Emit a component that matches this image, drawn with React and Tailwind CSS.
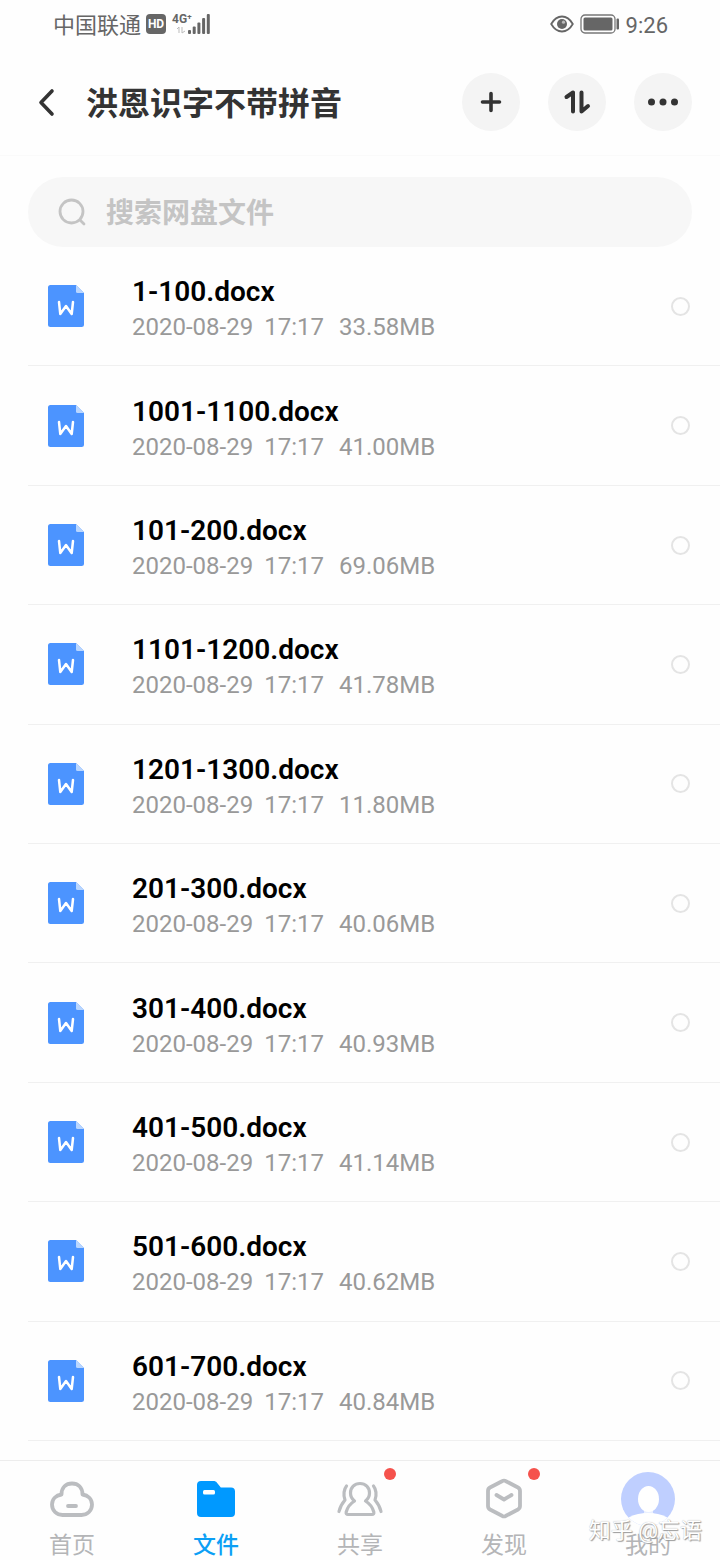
import React, { useState } from "react";

const files = [
  { name: "1-100.docx", size: "33.58MB" },
  { name: "1001-1100.docx", size: "41.00MB" },
  { name: "101-200.docx", size: "69.06MB" },
  { name: "1101-1200.docx", size: "41.78MB" },
  { name: "1201-1300.docx", size: "11.80MB" },
  { name: "201-300.docx", size: "40.06MB" },
  { name: "301-400.docx", size: "40.93MB" },
  { name: "401-500.docx", size: "41.14MB" },
  { name: "501-600.docx", size: "40.62MB" },
  { name: "601-700.docx", size: "40.84MB" },
];

const StatusBar = () => (
  <div className="flex h-12 items-center justify-between pl-[53px] pr-[52px] text-[22px] text-[#666]">
    <div className="flex items-center">
      <span className="pt-0.5">中国联通</span>
      <span className="ml-[5px] flex h-5 w-5 items-center justify-center rounded bg-[#666] text-[12px] font-bold leading-none text-white">HD</span>
      <div className="ml-1.5 flex items-end">
        <div className="flex h-6 w-[18px] flex-col">
          <span className="text-[12px] font-bold leading-[14px]">4G⁺</span>
          <svg className="ml-1 h-2 w-2.5" viewBox="0 0 10 8" fill="none" stroke="#bbb">
            <path d="M1 3 3 1v6M6 1v6l3-2" />
          </svg>
        </div>
        <svg className="mb-[2px] h-5 w-[22px] -ml-0.5" viewBox="0 0 22 20" fill="#666">
          <rect x="0" y="16" width="3" height="4" rx="1" />
          <rect x="4.7" y="12.5" width="3" height="7.5" rx="1" />
          <rect x="9.4" y="8.5" width="3" height="11.5" rx="1" />
          <rect x="14.1" y="4" width="3" height="16" rx="1" />
          <rect x="18.8" y="0" width="3" height="20" rx="1" />
        </svg>
      </div>
    </div>
    <div className="flex items-center">
      <svg className="h-[18px] w-6" viewBox="0 0 24 18" fill="none" stroke="#666" strokeWidth="1.8">
        <path d="M1.2 9Q5.5 1.5 12 1.5T22.8 9Q18.5 16.5 12 16.5T1.2 9Z" />
        <circle cx="12" cy="9" r="5" fill="#666" stroke="none" />
        <circle cx="13.5" cy="7.2" r="1.6" fill="#bbb" stroke="none" />
      </svg>
      <svg className="ml-1.5 h-5 w-10" viewBox="0 0 40 20" fill="none">
        <rect x="1" y="1" width="34" height="18" rx="4" stroke="#777" strokeWidth="1.3" />
        <rect x="3.5" y="3.5" width="29" height="13" rx="1.5" fill="#666" />
        <rect x="36.5" y="4.5" width="2.5" height="11" rx="1" fill="#666" />
      </svg>
      <span className="ml-1.5 pt-0.5">9:26</span>
    </div>
  </div>
);

const RoundButton = ({ label, children }) => (
  <button type="button" aria-label={label} className="flex h-[58px] w-[58px] items-center justify-center rounded-full bg-[#f4f4f4]">
    <svg className="h-8 w-8" viewBox="0 0 32 32" fill="none" stroke="#333" strokeWidth="3.6" strokeLinecap="round" strokeLinejoin="round">
      {children}
    </svg>
  </button>
);

const Header = () => (
  <header className="flex h-[108px] items-center border-b border-[#fafafa] pl-8 pr-7">
    <button type="button" aria-label="返回" className="flex h-12 w-[54px] items-center">
      <svg className="h-8 w-8" viewBox="0 0 32 32" fill="none" stroke="#333" strokeWidth="3.6" strokeLinecap="round" strokeLinejoin="round">
        <path d="M20 5 9 16.500 20 28" />
      </svg>
    </button>
    <h1 className="flex-1 pt-1 text-[32px] font-bold leading-10 text-[#333]">洪恩识字不带拼音</h1>
    <div className="flex gap-7">
      <RoundButton label="新建">
        <path d="M16 7.5v17M7.5 16h17" />
      </RoundButton>
      <RoundButton label="排序">
        <path d="M5.5 11 12 6.500v19M20.500 6.500v19l6.500-5.500" strokeWidth="4" />
      </RoundButton>
      <RoundButton label="更多">
        <g fill="#333" stroke="none">
          <circle cx="4.5" cy="16" r="3.5" />
          <circle cx="16" cy="16" r="3.5" />
          <circle cx="27.5" cy="16" r="3.5" />
        </g>
      </RoundButton>
    </div>
  </header>
);

const DocIcon = () => (
  <svg className="h-[42px] w-9 shrink-0" viewBox="0 0 36 42">
    <path d="M2.5 0H28l8 8v31.500a2.500 2.500 0 0 1-2.500 2.500h-31A2.500 2.500 0 0 1 0 39.500v-37A2.500 2.500 0 0 1 2.500 0Z" fill="#4c94ff" />
    <path d="M28 0l8 8h-6.500A1.500 1.500 0 0 1 28 6.500Z" fill="#b9d6ff" />
    <path d="M11 17l1.300 12L18 21l5.700 8L25 17" fill="none" stroke="#fff" strokeWidth="2.5" strokeLinejoin="round" strokeLinecap="round" />
  </svg>
);

const FileRow = ({ file, checked, onToggle }) => (
  <li className="ml-7 flex flex-1 items-center border-b border-[#f0f0f0] pl-5 pr-[30px]">
    <DocIcon />
    <label htmlFor={file.name} className="ml-12 flex-1 pt-1.5">
      <span className="block text-[28px] font-semibold leading-9 text-black">{file.name}</span>
      <span className="flex text-[24px] leading-[34px] text-[#999]">
        <span>2020-08-29</span>
        <span className="ml-[11px]">17:17</span>
        <span className="ml-[15px]">{file.size}</span>
      </span>
    </label>
    <input
      id={file.name}
      type="checkbox"
      checked={checked}
      onChange={onToggle}
      className="h-[19px] w-[19px] appearance-none rounded-full border-2 border-[#e4e4e4] checked:border-[#0099ff] checked:bg-[#0099ff]"
    />
  </li>
);

const NavItem = ({ label, active, dot, children }) => (
  <a
    href="#"
    className={`flex flex-1 flex-col items-center pt-[11px] text-[23px] ${active ? "font-medium text-[#0c9ff5]" : "text-[#b4b5b7]"}`}
  >
    <span className="relative flex h-[54px] w-[54px] shrink-0 items-center justify-center">
      {children}
      {dot && <span className="absolute -right-[9px] -top-1 h-3 w-3 rounded-full bg-[#f5524c]" />}
    </span>
    <span className="pt-1.5 leading-7">{label}</span>
  </a>
);

const navIcon = {
  className: "h-12 w-12",
  viewBox: "0 0 48 48",
  fill: "none",
  stroke: "#bbbdc0",
  strokeWidth: 3.8,
  strokeLinecap: "round",
  strokeLinejoin: "round",
};

const BottomNav = () => (
  <nav className="relative flex h-[100px] border-t border-[#ededed]">
    <NavItem label="首页">
      <svg {...navIcon}>
        <path d="M13.5 19.5C13.5 12.500 18 8.500 24 8.500s10.500 4 10.500 11c5.500.8 9.500 4.500 9.500 10 0 6-4.500 10.500-10.500 10.500h-19C8.500 40 4 35.500 4 29.500c0-5.500 4-9.200 9.500-10Z" />
        <path d="M20 31h8" />
      </svg>
    </NavItem>
    <NavItem label="文件" active>
      <svg className="h-12 w-12" viewBox="0 0 48 48">
        <path d="M9 6h12.500c1.500 0 2.500.5 3.300 1.500l4 5H39a4 4 0 0 1 4 4V38a4 4 0 0 1-4 4H9a4 4 0 0 1-4-4V10a4 4 0 0 1 4-4Z" fill="#0099ff" />
        <rect x="11" y="15" width="12" height="4.5" rx="1.5" fill="#fff" />
      </svg>
    </NavItem>
    <NavItem label="共享" dot>
      <svg {...navIcon} strokeWidth={3.2}>
        <path d="M24 8.500c-5.500 0-9.500 4-9.500 9.500 0 3.500 1.500 6 4 8-4 2.500-7 6-8.300 11-.3 1.500.3 2.500 1.800 2.500h24c1.500 0 2.100-1 1.800-2.500-1.300-5-4.300-8.500-8.300-11 2.500-2 4-4.500 4-8 0-5.500-4-9.500-9.500-9.500Z" />
        <path d="M10.500 11C8 14 7 20 9 25c-3 3.500-5 7-6 11.500M37.500 11c2.500 3 3.500 9 1.500 14 3 3.500 5 7 6 11.500" />
      </svg>
    </NavItem>
    <NavItem label="发现" dot>
      <svg {...navIcon}>
        <path d="M22 6.200a4 4 0 0 1 4 0l12 6.300a4 4 0 0 1 2 3.500v15a4 4 0 0 1-2 3.500l-12 6.300a4 4 0 0 1-4 0l-12-6.300A4 4 0 0 1 8 31V16a4 4 0 0 1 2-3.500Z" />
        <path d="m16.500 20 7.500 4.500 7.500-4.500" />
      </svg>
    </NavItem>
    <NavItem label="我的">
      <svg className="h-[54px] w-[54px]" viewBox="0 0 54 54">
        <defs>
          <clipPath id="avatar">
            <circle cx="27" cy="27" r="27" />
          </clipPath>
        </defs>
        <g clipPath="url(#avatar)">
          <rect width="54" height="54" fill="#bfcfff" />
          <path d="M23 35h9v6l4 3H19l4-3Z" fill="#eaf0ff" />
          <ellipse cx="27.5" cy="27" rx="10.5" ry="13" fill="#fff" />
          <ellipse cx="27" cy="55" rx="26" ry="14" fill="#fff" />
        </g>
      </svg>
    </NavItem>
    <span className="pointer-events-none absolute bottom-[11px] right-[18px] whitespace-nowrap text-[22px] leading-9 text-white [text-shadow:1px_1px_1px_#999,0_0_1px_#aaa]">知乎 @忘语</span>
  </nav>
);

const App = () => {
  const [selected, setSelected] = useState([]);

  const toggle = (name) => {
    setSelected(selected.includes(name) ? selected.filter((n) => n !== name) : [...selected, name]);
  };

  return (
    <div className="flex min-h-screen flex-col bg-[#fefefe] font-[Roboto,'Noto_Sans_CJK_SC',sans-serif]">
      <StatusBar />
      <Header />
      <div className="mx-7 mt-[21px] flex h-[70px] shrink-0 items-center rounded-full bg-[#f7f7f7] px-[30px]">
        <svg className="h-7 w-7" viewBox="0 0 28 28" fill="none" stroke="#c4c4c4" strokeWidth="2.8" strokeLinecap="round">
          <circle cx="13.5" cy="13.5" r="11.5" />
          <path d="m22 22 4 4" />
        </svg>
        <input
          type="text"
          aria-label="搜索网盘文件"
          placeholder="搜索网盘文件"
          className="ml-5 min-w-0 flex-1 bg-transparent pt-1 text-[28px] font-bold outline-none placeholder:text-[#c4c4c4]"
        />
      </div>
      <ul className="mb-[19px] flex flex-1 flex-col">
        {files.map((file) => (
          <FileRow key={file.name} file={file} checked={selected.includes(file.name)} onToggle={() => toggle(file.name)} />
        ))}
      </ul>
      <BottomNav />
    </div>
  );
};

export default App;
